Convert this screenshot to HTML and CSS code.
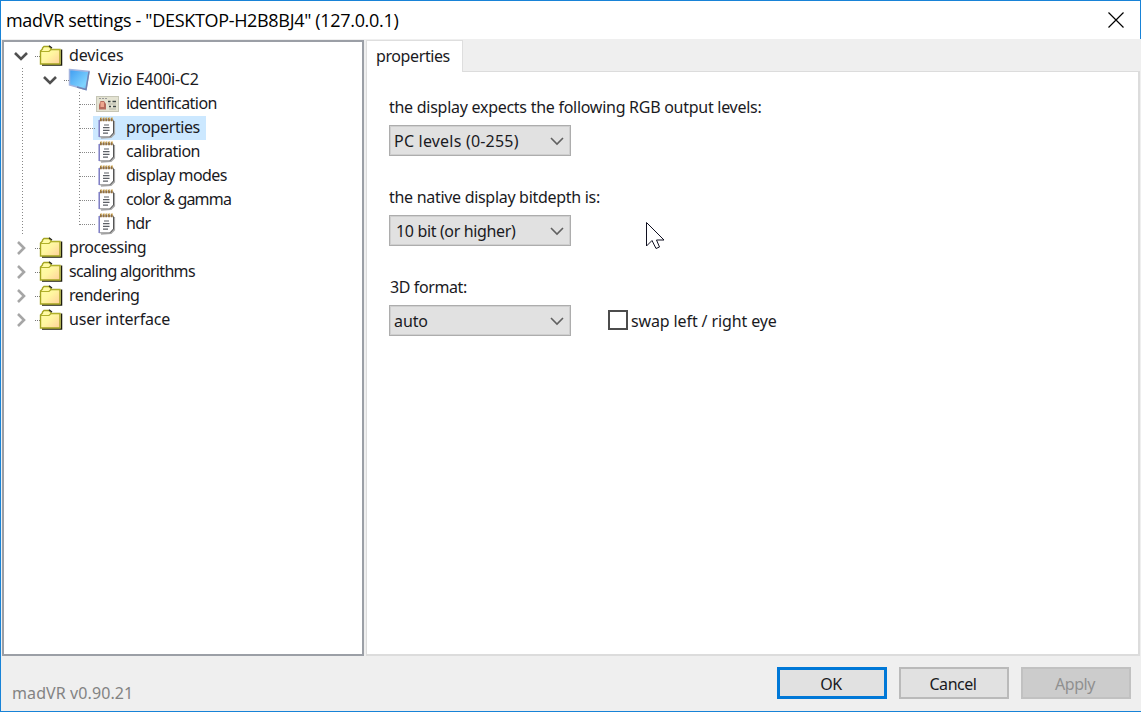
FILE: index.html
```html
<!DOCTYPE html>
<html lang="en">
<head>
	<meta charset="UTF-8">
	<title>madVR settings</title>
	<link rel="stylesheet" href="styles.css">
</head>
<body>
<svg class="defs">
	<linearGradient id="paper" x1="0" y1="0" x2="1" y2="1">
		<stop offset="0" stop-color="#ffffa8"/>
		<stop offset=".5" stop-color="#fff6a0"/>
		<stop offset="1" stop-color="#ffcf9c"/>
	</linearGradient>
	<linearGradient id="screen" x1="0" y1="0" x2="1" y2="1">
		<stop offset="0" stop-color="#3f9cf0"/>
		<stop offset=".75" stop-color="#80d4ff"/>
		<stop offset="1" stop-color="#62b4ee"/>
	</linearGradient>
	<symbol id="folder" viewBox="0 0 24 24">
		<path d="M3 21H22.500V5.500" fill="none" stroke="#1c1c0c" stroke-width="1.500"/>
		<path d="M1.500 20V7L3.500 5V4L5 2.500H10L12 4.500V5.500H21V20Z" fill="url(#paper)" stroke="#a5a522" stroke-width="1.400"/>
		<path d="M2 7.500H10L12 5.500H21" fill="none" stroke="#b0b02a" stroke-width="1.200"/>
		<path d="M10 1.800L13 4" stroke="#222" stroke-width="1.200"/>
	</symbol>
	<symbol id="page" viewBox="0 0 24 24">
		<path d="M6 22L16 21.300L19.300 18V5" fill="none" stroke="#a8a8a8" stroke-width="1.600"/>
		<path d="M4.500 4H18.500V17L15 20.800H4.500Z" fill="#fff" stroke="#8c8c8c"/>
		<path d="M4.200 4V21" stroke="#8080c8" stroke-width="1.500"/>
		<path d="M18.500 5V17L15 20.800" fill="none" stroke="#555"/>
		<path d="M9 9H14M8 11.700H14.500M8 14.400H14.500M8 17.100H13" stroke="#5c6066" stroke-width="1.200"/>
		<path d="M5 3.500H18.500" stroke="#94703c" stroke-width="3.600" stroke-dasharray="1.800 .9"/>
		<path d="M5.800 2.200H18" stroke="#e8c468" stroke-width="1.200" stroke-dasharray="1.200 1.500"/>
	</symbol>
	<symbol id="down" viewBox="0 0 14 10">
		<path d="M1 2L7 8L13 2" fill="none" stroke="currentColor"/>
	</symbol>
</svg>
<div class="window">
	<div class="titlebar">
		<span class="title">madVR settings - "DESKTOP-H2B8BJ4" (127.0.0.1)</span>
		<svg class="close" viewBox="0 0 16 16"><path d="M.5 .5L15.500 15.500M15.500 .5L.5 15.500" stroke="#000" stroke-width="1.200"/></svg>
	</div>
	<div class="main">
		<div class="tree">
			<div class="row"><svg class="arrow open"><use href="#down"/></svg><i class="stub"></i><svg class="icon"><use href="#folder"/></svg><span class="devices">devices</span></div>
			<div class="branch">
				<div class="row"><svg class="arrow open"><use href="#down"/></svg><i class="stub"></i><svg class="icon" viewBox="0 0 24 24"><path d="M1.500 1.500L21 3.500L18 21.500L1.500 17Z" fill="url(#screen)" stroke="#a2b4e0" stroke-width="1.500"/><path d="M21 3.500L18 21.500L9 19" fill="none" stroke="#7085b4" stroke-width="1.500"/></svg><span class="vizio">Vizio E400i-C2</span></div>
				<div class="leaves">
					<div class="row"><i class="line"></i><svg class="icon" viewBox="0 0 24 24"><rect x="1.500" y="4.500" width="22" height="15" fill="#e4e3d2" stroke="#c6c6b6"/><path d="M4 6.500H13" stroke="#999" stroke-dasharray="2 1"/><path d="M4 17.500V13L5.500 9H9L11 12V17.500Z" fill="#b66a5c"/><path d="M5.500 13V10H9V15H5.500Z" fill="#eda68e"/><path d="M13 9.500H15.500M17.500 9.500H21M14 14.500H16M18 14.500H21" stroke="#3c4444" stroke-width="1.600"/><path d="M13 12H21M14 17H21" stroke="#b4b4a8"/></svg><span class="ident">identification</span></div>
					<div class="row selected"><i class="line"></i><svg class="icon"><use href="#page"/></svg><span class="prop">properties</span></div>
					<div class="row"><i class="line"></i><svg class="icon"><use href="#page"/></svg><span class="calib">calibration</span></div>
					<div class="row"><i class="line"></i><svg class="icon"><use href="#page"/></svg><span class="modes">display modes</span></div>
					<div class="row"><i class="line"></i><svg class="icon"><use href="#page"/></svg><span class="gamma">color &amp; gamma</span></div>
					<div class="row"><i class="line"></i><svg class="icon"><use href="#page"/></svg><span class="hdr">hdr</span></div>
				</div>
			</div>
			<div class="row"><svg class="arrow closed"><use href="#down"/></svg><i class="stub"></i><svg class="icon"><use href="#folder"/></svg><span class="processing">processing</span></div>
			<div class="row"><svg class="arrow closed"><use href="#down"/></svg><i class="stub"></i><svg class="icon"><use href="#folder"/></svg><span class="scaling">scaling algorithms</span></div>
			<div class="row"><svg class="arrow closed"><use href="#down"/></svg><i class="stub"></i><svg class="icon"><use href="#folder"/></svg><span class="rendering">rendering</span></div>
			<div class="row"><svg class="arrow closed"><use href="#down"/></svg><i class="stub"></i><svg class="icon"><use href="#folder"/></svg><span class="ui">user interface</span></div>
		</div>
		<div class="tabs">
			<div class="tab"><span class="prop">properties</span></div>
			<div class="page">
				<div class="label levels">the display expects the following RGB output levels:</div>
				<div class="select"><span class="pc">PC levels (0-255)</span><svg><use href="#down"/></svg></div>
				<div class="label native">the native display bitdepth is:</div>
				<div class="select bits"><span class="ten">10 bit (or higher)</span><svg><use href="#down"/></svg></div>
				<div class="label format">3D format:</div>
				<div class="line3d">
					<div class="select"><span class="auto">auto</span><svg><use href="#down"/></svg></div>
					<i class="check"></i><span class="swap">swap left / right eye</span>
				</div>
			</div>
		</div>
	</div>
	<div class="footer">
		<span class="version">madVR v0.90.21</span>
		<div class="button ok"><span>OK</span></div>
		<div class="button cancel"><span>Cancel</span></div>
		<div class="button apply"><span>Apply</span></div>
	</div>
</div>
<svg class="cursor" viewBox="0 0 20 28"><path d="M.5 .5V24L6 18.500L10 26.500L13.500 25L10.500 18H18Z" fill="#fff" stroke="#101020"/></svg>
</body>
</html>
```
FILE: styles.css
```css
* { box-sizing: border-box; }

body {
	margin: 0;
	overflow: hidden;
	font: 16px/24px "Noto Sans", sans-serif;
	letter-spacing: -0.45px;
	color: #1a1a1e;
	white-space: nowrap;
}

.defs { position: absolute; width: 0; height: 0; }

.window {
	width: 1141px;
	height: 712px;
	display: flex;
	flex-direction: column;
	background: #efefef;
	border: 1px solid #1883d7;
	border-right: 0;
}

.titlebar {
	height: 38px;
	display: flex;
	justify-content: space-between;
	padding: 0 16px 0 5px;
	background: #fff;
	border-right: 1px solid #1883d7;
	color: #000;
}

.title {
	font: 18px/38px "Open Sans", sans-serif;
	letter-spacing: -0.32px;
}

.close {
	width: 16px;
	height: 16px;
	margin-top: 11px;
}

.main {
	height: 617px;
	display: flex;
	padding: 1px 1px 0 1px;
}

.tree {
	width: 362px;
	height: 616px;
	padding: 2px 0 0 9px;
	background: #fff;
	border: 2px solid #9b9fa6;
}

.row {
	display: flex;
	align-items: center;
	height: 24px;
}

.row span {
	height: 24px;
	line-height: 23px;
}

.arrow {
	flex: none;
	width: 14px;
	height: 10px;
	margin: 0 7px 0 1px;
	color: #505050;
	stroke-width: 2.6px;
}

.closed {
	color: #a6a6a6;
	transform: rotate(-90deg);
}

.stub {
	width: 5px;
	margin-right: -1px;
	border-top: 1px dotted #777;
}

.icon {
	flex: none;
	width: 24px;
	height: 24px;
	margin-right: 6px;
}

.branch {
	margin-left: 9px;
	padding-left: 20px;
	background: repeating-linear-gradient(#888 0 1px, #fff 1px 3px) 0 0 / 1px 100% no-repeat;
}

.leaves {
	margin-left: 37px;
	background: repeating-linear-gradient(#888 0 1px, #fff 1px 3px) 0 0 / 1px 133px no-repeat;
}

.leaves .icon { margin-right: 7px; }

.line {
	width: 16px;
	border-top: 1px dotted #888;
}

.selected {
	width: 128px;
	background: linear-gradient(#cce8ff, #cce8ff) 14px 0 / 113px 24px no-repeat;
}

.devices { letter-spacing: -0.1px; }
.vizio { letter-spacing: -0.25px; }
.ident { letter-spacing: -0.55px; }
.prop { letter-spacing: -0.4px; }
.calib { letter-spacing: -0.5px; }
.modes { letter-spacing: -0.55px; }
.gamma { letter-spacing: -0.8px; }
.hdr { letter-spacing: -0.6px; }
.scaling { letter-spacing: -0.68px; }
.ui { letter-spacing: -0.2px; }
.levels { letter-spacing: -0.27px; }
.native { letter-spacing: -0.3px; }
.pc { letter-spacing: 0.2px; }
.ten { letter-spacing: -0.35px; }
.auto { letter-spacing: -0.1px; }
.swap { letter-spacing: -0.12px; }
.version { letter-spacing: 0.1px; }

.tabs {
	flex: 1;
	margin-left: 2px;
	display: flex;
	flex-direction: column;
}

.tab {
	width: 97px;
	height: 32px;
	padding: 3px 0 0 9px;
	margin-bottom: -1px;
	position: relative;
	background: #fff;
	border: 1px solid #dedede;
	border-bottom: 0;
}

.page {
	height: 585px;
	padding: 23px 0 0 22px;
	background: #fff;
	border: 1px solid #dcdcdc;
	border-right-width: 2px;
	border-bottom-width: 2px;
}

.label { height: 30px; }

.select {
	flex: none;
	display: flex;
	align-items: center;
	justify-content: space-between;
	width: 182px;
	height: 31px;
	margin-bottom: 29px;
	padding: 0 6px 0 4px;
	background: #e1e1e1;
	border: 1px solid #adadad;
	box-shadow: inset 0 0 0 1px #cfcfcf;
}

.select svg {
	width: 14px;
	height: 10px;
	color: #606060;
	stroke-width: 1.6px;
}

.bits { padding-left: 6px; }
.format { padding-left: 1px; letter-spacing: -0.4px; }
.line3d { display: flex; }

.check {
	width: 20px;
	height: 20px;
	margin: 5px 3px 0 37px;
	border: 2px solid #4c4c4c;
}

.swap { padding-top: 4px; }

.footer {
	flex: 1;
	display: flex;
	padding: 11px 10px 0 11px;
}

.version {
	flex: 1;
	padding-top: 14px;
	color: #838383;
}

.button {
	width: 110px;
	height: 32px;
	margin-left: 12px;
	padding-right: 2px;
	background: #e1e1e1;
	border: 2px solid #bababa;
	line-height: 30px;
	text-align: center;
}

.ok { border: 3px solid #0078d7; line-height: 28px; }

.apply {
	background: #cccccc;
	border-color: #c1c1c1;
	color: #909090;
}

.cursor {
	position: absolute;
	left: 646px;
	top: 222px;
	width: 20px;
	height: 28px;
}
```
